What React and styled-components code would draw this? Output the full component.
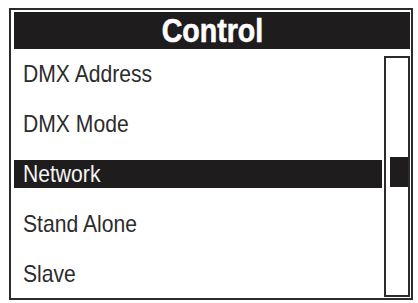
import React from 'react';
import styled, { createGlobalStyle } from 'styled-components';

const GlobalStyle = createGlobalStyle`
  html, body {
    margin: 0;
    padding: 0;
    background: #ffffff;
  }
  body {
    font-family: "Liberation Sans", Arial, sans-serif;
  }
`;

const items = ['DMX Address', 'DMX Mode', 'Network', 'Stand Alone', 'Slave'];
const selected = 2;

export default function App() {
  return (
    <Page>
      <GlobalStyle />
      <Frame>
        <TitleBar>
          <TitleText>Control</TitleText>
        </TitleBar>
        <Body>
          <List>
            {items.map((label, i) => (
              <Row key={label}>
                <Label active={i === selected}>
                  <Narrow>{label}</Narrow>
                </Label>
              </Row>
            ))}
          </List>
          <ScrollTrack>
            <ScrollThumb />
          </ScrollTrack>
        </Body>
      </Frame>
    </Page>
  );
}

const Page = styled.div`
  width: 418px;
  height: 303px;
  padding: 8px 0 0 9px;
  box-sizing: border-box;
`;

const Frame = styled.div`
  width: 404px;
  height: 292px;
  box-sizing: border-box;
  border: 2px solid #2b2b2b;
  padding: 2px 1px 2px 3px;
  display: flex;
  flex-direction: column;
`;

const TitleBar = styled.div`
  height: 37px;
  background: #1f1c1d;
  color: #ffffff;
  display: flex;
  align-items: center;
  justify-content: center;
`;

/* the panel font is a condensed grotesk; squeeze Liberation Sans to match */
const TitleText = styled.span`
  display: inline-block;
  font-weight: 700;
  font-size: 34px;
  transform: scaleX(0.84);
  -webkit-text-stroke: 0.6px #ffffff;
`;

const Body = styled.div`
  flex: 1;
  display: flex;
`;

const List = styled.div`
  flex: 1;
  display: flex;
  flex-direction: column;
  padding-right: 2px;
`;

const Row = styled.div`
  height: 50px;
  display: flex;
  align-items: center;
`;

const Label = styled.div`
  flex: 1;
  height: 28px;
  display: flex;
  align-items: center;
  padding-left: 9px;
  font-size: 24px;
  color: ${p => (p.active ? '#f4f4f4' : '#2c2c2c')};
  background: ${p => (p.active ? '#1f1c1d' : 'transparent')};
`;

const Narrow = styled.span`
  display: inline-block;
  transform: scaleX(0.88);
  transform-origin: left center;
  white-space: nowrap;
`;

const ScrollTrack = styled.div`
  width: 26px;
  box-sizing: border-box;
  margin: 7px 0 2px 0;
  border: 2px solid #2b2b2b;
  padding: 0 0 0 4px;
  display: flex;
  flex-direction: column;
`;

const ScrollThumb = styled.div`
  margin-top: 99px;
  height: 30px;
  background: #1f1c1d;
`;
